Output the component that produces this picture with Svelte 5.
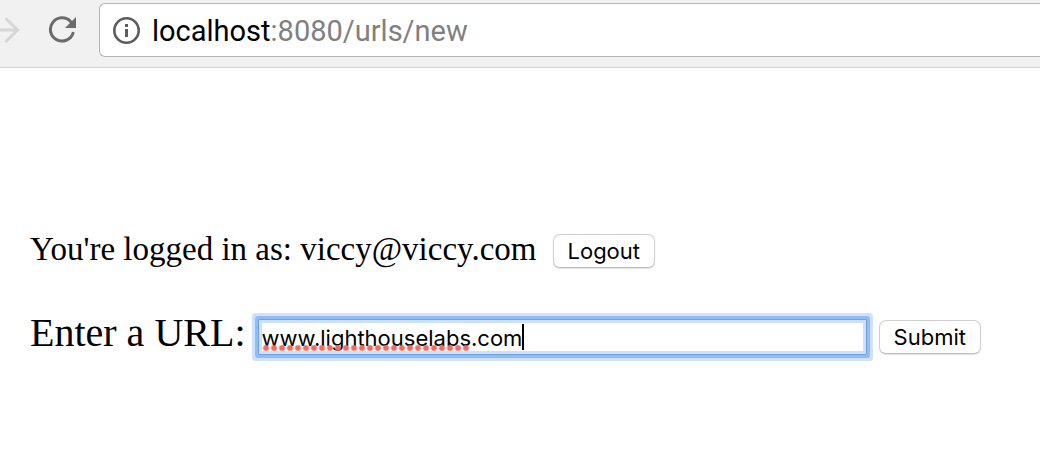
<script>
  let url = $state('www.lighthouselabs.com');
  const host = 'localhost';
  const path = ':8080/urls/new';
</script>

<header class="toolbar">
  <button class="nav forward" type="button" aria-label="Forward" disabled>
    <svg width="20" height="26" viewBox="0 0 20 26" fill="none" stroke="#d6d6d6" stroke-width="3" stroke-linecap="round">
      <path d="M-4 13H17M6.500 2L17.500 13L6.500 24" />
    </svg>
  </button>
  <button class="nav reload" type="button" aria-label="Reload">
    <svg width="28" height="28" viewBox="0 0 28 28">
      <path d="M22.500 5.500A11.600 11.600 0 1 0 25 17.200" fill="none" stroke="#6b6b6b" stroke-width="3" stroke-linecap="round" />
      <path d="M28 1V12H17Z" fill="#6b6b6b" />
    </svg>
  </button>
  <div class="address">
    <svg width="28" height="28" viewBox="0 0 28 28">
      <circle cx="14.500" cy="14.500" r="12.200" fill="none" stroke="#5c5c5c" stroke-width="2.600" />
      <path d="M13 8h3v3h-3zM13 13h3v8h-3z" fill="#5c5c5c" />
    </svg>
    <span class="location"><span class="host">{host}</span>{path}</span>
  </div>
</header>

<main>
  <form class="session" onsubmit={(e) => e.preventDefault()}>
    <span class="user">You're logged in as: viccy@viccy.com</span>
    <button class="push" type="submit">Logout</button>
  </form>

  <form class="entry" onsubmit={(e) => e.preventDefault()}>
    <label for="url">Enter a URL:</label>
    <div class="field">
      <input id="url" type="text" bind:value={url} spellcheck="false" />
      <span class="spelling"></span>
      <span class="caret"></span>
    </div>
    <button class="push" type="submit">Submit</button>
  </form>
</main>

<style>
  :global(body) {
    background: #fff;
    color: #000;
  }

  .toolbar {
    display: flex;
    align-items: flex-start;
    padding: 3px 0 10px;
    background: #f1f1f1;
    border-bottom: 1px solid #d2d2d2;
    overflow: hidden;
  }

  .nav {
    display: flex;
    align-items: center;
    height: 54px;
    padding: 0;
    border: 0;
    background: none;
  }

  .nav svg,
  .address svg {
    display: block;
    flex: none;
  }

  .reload {
    margin: 0 22px 0 28px;
  }

  .address {
    display: flex;
    flex: 1;
    align-items: center;
    gap: 12px;
    height: 54px;
    box-sizing: border-box;
    margin-left: 1px;
    padding-left: 12px;
    border: 1px solid #b4b4b4;
    border-right: 0;
    border-radius: 6px 0 0 6px;
    background: #fff;
  }

  .location {
    padding-top: 2px;
    font: 29px/34px Roboto, sans-serif;
    color: #808080;
    white-space: nowrap;
  }

  .host {
    color: #000;
  }

  main {
    padding: 161px 59px 40px 30px;
    font-family: "Liberation Serif", serif;
  }

  .session,
  .entry {
    display: flex;
    align-items: center;
    white-space: nowrap;
  }

  .session {
    gap: 16px;
    font-size: 33px;
    line-height: 40px;
  }

  .user {
    padding-bottom: 4px;
  }

  .entry {
    margin-top: 36px;
    font-size: 40px;
    line-height: 48px;
  }

  .entry label {
    padding-bottom: 8px;
  }

  .push {
    height: 34px;
    box-sizing: border-box;
    padding: 0 14px;
    border: 1px solid #cfcfcf;
    border-bottom-color: #bdbdbd;
    border-radius: 7px;
    background: #fff;
    box-shadow: 0 1px 1px #e2e2e2;
    color: #000;
    font: 22px/28px Inter, sans-serif;
  }

  .field {
    position: relative;
    flex: 1;
    display: flex;
    margin: 0 12px;
  }

  input {
    flex: 1;
    min-width: 0;
    height: 36px;
    box-sizing: border-box;
    padding: 2px 3px 0;
    border: 1px solid #6ea3e6;
    outline: 0;
    background: #fff;
    box-shadow:
      inset 0 0 0 3px #cfe1fa,
      0 0 0 3px #8fbcf8,
      0 0 0 6px #cfe2fb;
    border-radius: 1px;
    color: #000;
    font: 22px/28px Inter, sans-serif;
  }

  .spelling {
    position: absolute;
    left: 4px;
    top: 26px;
    width: 208px;
    height: 6px;
    background: radial-gradient(circle at 4px 3px, #ee6c60 2px, #ee6c6000 4px) 0 0 / 8px 6px;
    pointer-events: none;
  }

  .caret {
    position: absolute;
    left: 264px;
    top: 5px;
    width: 2px;
    height: 26px;
    background: #000;
    pointer-events: none;
  }
</style>
